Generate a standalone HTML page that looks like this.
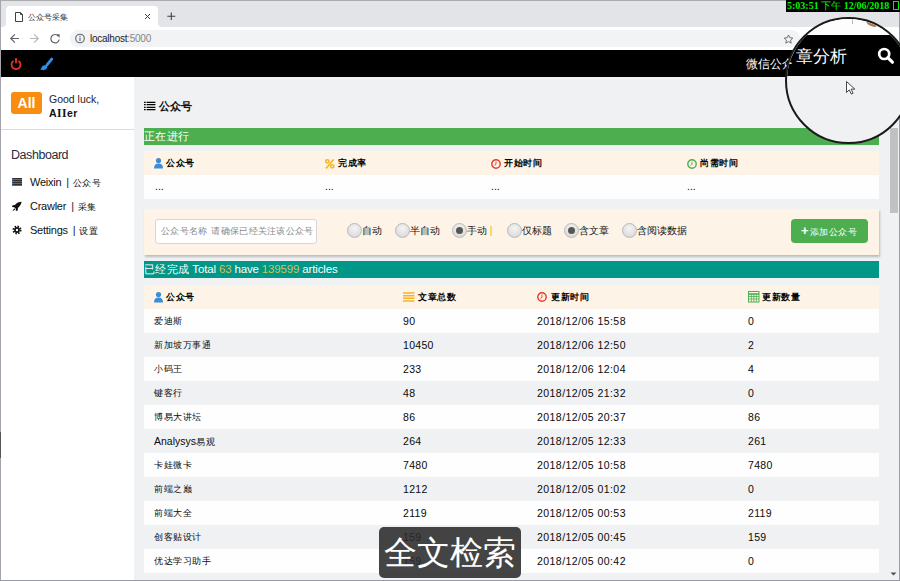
<!DOCTYPE html>
<html><head><meta charset="utf-8">
<style>
*{box-sizing:border-box;margin:0;padding:0}
html,body{width:900px;height:581px;overflow:hidden}
body{position:relative;background:#f0f1f3;font-family:"Liberation Sans",sans-serif;color:#222}
.a{position:absolute}
svg{position:absolute;overflow:visible}
#tabs{left:0;top:0;width:900px;height:27px;background:#e2e4e8;border-top:1px solid #a9abad}
#tab{left:6px;top:6px;width:152px;height:21px;background:#fff;border-radius:4px 4px 0 0}
#addr{left:0;top:27px;width:900px;height:23px;background:#fff}
#omni{left:70px;top:30px;width:730px;height:17px;background:#f1f3f4;border-radius:9px}
#nav{left:0;top:50px;width:900px;height:27px;background:#000}
#side{left:0;top:77px;width:134px;height:504px;background:#fff}
.bar{left:144px;width:735px;height:17px;color:#fff;font-size:11px;line-height:17px;white-space:nowrap;letter-spacing:0.25px}
.thead{left:144px;width:735px;height:24px;background:#fdf4e7;font-size:9px;letter-spacing:0.5px;font-weight:bold;line-height:25px;color:#000}
.row{left:144px;width:735px;height:24px;font-size:10.5px;line-height:24px;white-space:nowrap;color:#0a0a0a}
.w{background:#fefefe}
.g{background:#f0f1f3}
.c1{left:10px;font-size:9px;letter-spacing:0.5px}
.c2{left:259px;letter-spacing:0.3px}
.c3{left:393px;letter-spacing:0.45px}
.c4{left:604px;letter-spacing:0.3px}
.radio{width:15px;height:15px;border-radius:50%;border:1px solid #b9b9b9;background:radial-gradient(circle at 50% 35%,#f4f4f4,#d4d4d4)}
.radio.on::after{content:"";position:absolute;left:3px;top:3px;width:7px;height:7px;border-radius:50%;background:#555}
.rl{font-size:10px;color:#111;line-height:15px;white-space:nowrap}
.menu{font-size:11px;color:#111;white-space:nowrap;line-height:12px;letter-spacing:-0.25px}
.sep{margin:0 4px 0 5px;color:#223}
.zh{font-size:9px;letter-spacing:0.4px}
.lt{font-size:11.5px;letter-spacing:-0.15px}

</style></head><body>
<!-- browser chrome -->
<div class="a" id="tabs"></div>
<div class="a" style="left:1px;top:21px;width:162px;height:6px;background:#fff"></div>
<div class="a" style="left:1px;top:6px;width:5px;height:21px;background:#e2e4e8;border-bottom-right-radius:4px"></div>
<div class="a" style="left:158px;top:6px;width:742px;height:21px;background:#e2e4e8;border-bottom-left-radius:4px"></div>
<div class="a" id="tab"></div>
<svg style="left:0;top:0" width="900" height="50">
  <path d="M15.5 12.5h5l2 2v7h-7z M20.5 12.5v2h2" fill="none" stroke="#3c4043" stroke-width="1"/>
  <path d="M145 14l5 5M150 14l-5 5" stroke="#3c4043" stroke-width="1"/>
  <path d="M171.3 12.5v7.5M167.3 16.3h8" stroke="#3c4043" stroke-width="1.1"/>
</svg>
<div class="a" style="left:28px;top:12px;font-size:8px;line-height:11px;color:#333;white-space:nowrap">公众号采集</div>
<div class="a" id="addr"></div>
<div class="a" id="omni"></div>
<svg style="left:0;top:0" width="900" height="50">
  <path d="M19 38.5H10.8M14.9 34.3L10.7 38.5L14.9 42.7" fill="none" stroke="#5f6368" stroke-width="1.15"/>
  <path d="M30 38.5H38.2M34.1 34.3L38.3 38.5L34.1 42.7" fill="none" stroke="#b5b8bb" stroke-width="1.15"/>
  <path d="M58.3 36A4.2 4.2 0 1 0 59.2 39.5" fill="none" stroke="#5f6368" stroke-width="1.2"/>
  <path d="M56 34.2h3.6v3.6z" fill="#5f6368"/>
  <circle cx="80" cy="38.5" r="4.3" fill="none" stroke="#5f6368" stroke-width="1.1"/>
  <path d="M80 37.5v3.5M80 35.8v0.9" stroke="#5f6368" stroke-width="1.1"/>
  <path d="M788.5 35l1.3 2.7 3 .4-2.2 2 .6 3-2.7-1.5-2.7 1.5.6-3-2.2-2 3-.4z" fill="none" stroke="#5f6368" stroke-width="0.9"/>
</svg>
<div class="a" style="left:90px;top:32px;font-size:10px;line-height:13px;color:#202124;white-space:nowrap;letter-spacing:-0.25px">localhost<span style="color:#80868b">:5000</span></div>
<!-- clock -->
<div class="a" style="left:786px;top:0;width:114px;height:12px;background:#000;color:#00f400;font-family:'Liberation Serif',serif;font-weight:bold;font-size:10px;line-height:12px;white-space:nowrap;padding-left:1px">5:03:51 <span style="font-weight:normal">下午</span> 12/06/2018 <span style="display:inline-block;width:6px;height:9px;border:1px solid #00f400;vertical-align:-1px;margin-left:1px"></span></div>
<!-- navbar -->
<div class="a" id="nav"></div>
<svg style="left:0;top:50px" width="60" height="27">
  <path d="M13.5 10.9A4.5 4.5 0 1 0 18.5 10.9" fill="none" stroke="#ee3524" stroke-width="1.75"/>
  <path d="M16 8v5.2" stroke="#ee3524" stroke-width="1.75"/>
  <path d="M51.8 9L47 14.8" stroke="#2e8fe6" stroke-width="2.8" stroke-linecap="round"/>
  <path d="M46.8 15.6C44.8 14.6 42.2 15.4 41.6 17.4 41.3 18.4 40.6 18.9 40 19.1 41.5 20.4 44.6 20.6 46.2 19.1 47.3 18.1 47.6 16.4 46.8 15.6Z" fill="#2e8fe6"/>
</svg>
<div class="a" style="left:746px;top:57px;font-size:12px;line-height:14px;color:#fff;white-space:nowrap">微信公众号文章分析</div>
<!-- sidebar -->
<div class="a" id="side"></div>
<div class="a" style="left:11px;top:92px;width:31px;height:22px;background:#f98d12;border-radius:3px;color:#fff;font-weight:bold;font-size:14px;line-height:22px;text-align:center">All</div>
<div class="a" style="left:49px;top:93px;font-size:10.5px;line-height:13px;color:#1c1c2c;white-space:nowrap">Good luck,</div>
<div class="a" style="left:49px;top:107px;font-size:10.5px;line-height:13px;color:#111;font-weight:bold;white-space:nowrap;letter-spacing:0.3px">A<span style="font-family:'Liberation Serif',serif;font-size:11.5px;letter-spacing:0.6px">II</span>er</div>
<div class="a" style="left:1px;top:129px;width:133px;height:1px;background:#fbd98f"></div>
<div class="a" style="left:11px;top:149px;font-size:12.5px;line-height:13px;color:#2c2c40;white-space:nowrap;letter-spacing:-0.45px">Dashboard</div>
<svg style="left:0;top:0" width="30" height="240">
  <rect x="12" y="178" width="10" height="8" fill="#666"/>
  <path d="M12 178.5h10M12 180.5h10M12 182.5h10M12 184.5h10" stroke="#2a2a2a" stroke-width="0.9"/>
  <path d="M12.8 178v8" stroke="#3a8ee0" stroke-width="0.8" opacity="0.6"/>
  <path d="M21.6 201.8c-2.6 0-5 1.2-6.6 3.2l-2.4.3-.6 1.8 2.2.1 1.6 1.6.1 2.2 1.8-.6.3-2.4c2-1.6 3.2-4 3.6-6.2z" fill="#111"/>
  <path d="M14.2 208.3l-1.8 2.9 2.9-1.8z" fill="#111"/>
  <circle cx="17" cy="230" r="3.6" fill="none" stroke="#111" stroke-width="1.8" stroke-dasharray="1.5 1.33"/>
  <circle cx="17" cy="230" r="2.9" fill="#111"/>
  <circle cx="17" cy="230" r="1.2" fill="#fff"/>
</svg>
<div class="a menu" style="left:30px;top:176px">Weixin<span class="sep">|</span><span class="zh">公众号</span></div>
<div class="a menu" style="left:30px;top:200px">Crawler<span class="sep">|</span><span class="zh">采集</span></div>
<div class="a menu" style="left:30px;top:224px">Settings<span class="sep">|</span><span class="zh">设置</span></div>
<!-- main header -->
<svg style="left:144px;top:101px" width="14" height="12">
  <path d="M0 1.3h1.7M0 3.6h1.7M0 6.4h1.7M0 8.7h1.7M2.6 1.3h8.8M2.6 3.6h8.8M2.6 6.4h8.8M2.6 8.7h8.8" stroke="#000" stroke-width="1.3"/>
</svg>
<div class="a" style="left:159px;top:99px;font-size:11px;font-weight:bold;line-height:14px;color:#111;white-space:nowrap">公众号</div>
<!-- running -->
<div class="a bar" style="top:128px;background:#4cae4f">正在进行</div>
<div class="a thead" style="top:151px">
  <svg style="left:10px;top:7px" width="9" height="11"><circle cx="4.5" cy="2.6" r="2.6" fill="#3a8ed8"/><path d="M0 10.5c0-3.5 1.5-5 4.5-5s4.5 1.5 4.5 5z" fill="#3a8ed8"/></svg>
  <span class="a" style="left:22px">公众号</span>
  <svg style="left:181px;top:8px" width="10" height="10"><circle cx="2.3" cy="2.3" r="1.6" fill="none" stroke="#f5b324" stroke-width="1.5"/><circle cx="7.3" cy="7.3" r="1.6" fill="none" stroke="#f5b324" stroke-width="1.5"/><path d="M8.6 0.6L1 9.4" stroke="#f5b324" stroke-width="1.6"/></svg>
  <span class="a" style="left:194px">完成率</span>
  <svg style="left:347px;top:8px" width="10" height="10"><circle cx="5" cy="5" r="4.2" fill="none" stroke="#e43b2c" stroke-width="1.4"/><path d="M5 2.5v2.8l-1.5 1" fill="none" stroke="#e43b2c" stroke-width="0.9"/></svg>
  <span class="a" style="left:360px">开始时间</span>
  <svg style="left:543px;top:8px" width="10" height="10"><circle cx="5" cy="5" r="4.2" fill="none" stroke="#4cae4f" stroke-width="1.4"/><path d="M5 2.5v2.8l-1.5 1" fill="none" stroke="#4cae4f" stroke-width="0.9"/></svg>
  <span class="a" style="left:556px">尚需时间</span>
</div>
<div class="a row w" style="top:175px">
  <span class="a" style="left:11px;top:-1px">...</span>
  <span class="a" style="left:181px;top:-1px">...</span>
  <span class="a" style="left:347px;top:-1px">...</span>
  <span class="a" style="left:543px;top:-1px">...</span>
</div>
<!-- panel -->
<div class="a" style="left:144px;top:209px;width:735px;height:46px;background:#fdf4e7;box-shadow:1px 2px 2px rgba(0,0,0,0.22)"></div>
<div class="a" style="left:155px;top:219px;width:162px;height:25px;background:#fff;border:1px solid #d6d6d6;border-radius:3px;font-size:9px;line-height:23px;color:#8a8a8a;padding-left:5px;letter-spacing:0.3px;word-spacing:1px;white-space:nowrap;overflow:hidden">公众号名称 请确保已经关注该公众号</div>
<div class="a radio" style="left:347px;top:223px"></div><div class="a rl" style="left:362px;top:223px">自动</div>
<div class="a radio" style="left:395px;top:223px"></div><div class="a rl" style="left:410px;top:223px">半自动</div>
<div class="a radio on" style="left:452px;top:223px"></div><div class="a rl" style="left:467px;top:223px">手动 <span style="color:#f5a623">|</span></div>
<div class="a radio" style="left:507px;top:223px"></div><div class="a rl" style="left:522px;top:223px">仅标题</div>
<div class="a radio on" style="left:564px;top:223px"></div><div class="a rl" style="left:579px;top:223px">含文章</div>
<div class="a radio" style="left:622px;top:223px"></div><div class="a rl" style="left:637px;top:223px">含阅读数据</div>
<div class="a" style="left:791px;top:219px;width:77px;height:24px;background:#4cae4f;border-radius:4px;color:#fff;font-size:9px;letter-spacing:0.45px;line-height:24px;white-space:nowrap;padding-left:10px"><b style="font-size:13px;margin-right:1px">+</b>添加公众号</div>
<!-- done -->
<div class="a bar" style="top:261px;background:#009688">已经完成 <span class="lt">Total <span style="color:#cfc551">63</span> have <span style="color:#cfc551">139599</span> articles</span></div>
<div class="a thead" style="top:285px">
  <svg style="left:10px;top:7px" width="9" height="11"><circle cx="4.5" cy="2.6" r="2.6" fill="#3a8ed8"/><path d="M0 10.5c0-3.5 1.5-5 4.5-5s4.5 1.5 4.5 5z" fill="#3a8ed8"/></svg>
  <span class="a" style="left:22px">公众号</span>
  <svg style="left:259px;top:7px" width="12" height="10"><path d="M0 1h11.5M0 3.7h11.5M0 6.3h11.5M0 9h11.5" stroke="#f5b324" stroke-width="1.5"/></svg>
  <span class="a" style="left:274px">文章总数</span>
  <svg style="left:393px;top:7px" width="10" height="10"><circle cx="5" cy="5" r="4.2" fill="none" stroke="#e43b2c" stroke-width="1.4"/><path d="M5 2.5v2.8l-1.5 1" fill="none" stroke="#e43b2c" stroke-width="0.9"/></svg>
  <span class="a" style="left:407px">更新时间</span>
  <svg style="left:604px;top:6px" width="12" height="12"><rect x="0.5" y="0.5" width="10.5" height="10.5" fill="none" stroke="#4cae4f" stroke-width="1"/><path d="M0.5 3h10.5" stroke="#4cae4f" stroke-width="1.6"/><path d="M0.5 5.5h10.5M0.5 8h10.5M3.3 3v8M5.8 3v8M8.3 3v8" stroke="#4cae4f" stroke-width="0.8"/></svg>
  <span class="a" style="left:618px">更新数量</span>
</div>
<div class="a row w" style="top:309px"><span class="a c1">爱迪斯</span><span class="a c2">90</span><span class="a c3">2018/12/06 15:58</span><span class="a c4">0</span></div>
<div class="a row g" style="top:333px"><span class="a c1">新加坡万事通</span><span class="a c2">10450</span><span class="a c3">2018/12/06 12:50</span><span class="a c4">2</span></div>
<div class="a row w" style="top:357px"><span class="a c1">小码王</span><span class="a c2">233</span><span class="a c3">2018/12/06 12:04</span><span class="a c4">4</span></div>
<div class="a row g" style="top:381px"><span class="a c1">键客行</span><span class="a c2">48</span><span class="a c3">2018/12/05 21:32</span><span class="a c4">0</span></div>
<div class="a row w" style="top:405px"><span class="a c1">博易大讲坛</span><span class="a c2">86</span><span class="a c3">2018/12/05 20:37</span><span class="a c4">86</span></div>
<div class="a row g" style="top:429px"><span class="a c1"><span style="font-size:10.5px;letter-spacing:0">Analysys</span>易观</span><span class="a c2">264</span><span class="a c3">2018/12/05 12:33</span><span class="a c4">261</span></div>
<div class="a row w" style="top:453px"><span class="a c1">卡娃微卡</span><span class="a c2">7480</span><span class="a c3">2018/12/05 10:58</span><span class="a c4">7480</span></div>
<div class="a row g" style="top:477px"><span class="a c1">前端之巅</span><span class="a c2">1212</span><span class="a c3">2018/12/05 01:02</span><span class="a c4">0</span></div>
<div class="a row w" style="top:501px"><span class="a c1">前端大全</span><span class="a c2">2119</span><span class="a c3">2018/12/05 00:53</span><span class="a c4">2119</span></div>
<div class="a row g" style="top:525px"><span class="a c1">创客贴设计</span><span class="a c2">159</span><span class="a c3">2018/12/05 00:45</span><span class="a c4">159</span></div>
<div class="a row w" style="top:549px"><span class="a c1">优达学习助手</span><span class="a c2">159</span><span class="a c3">2018/12/05 00:42</span><span class="a c4">0</span></div>
<!-- scrollbar -->
<div class="a" style="left:887px;top:77px;width:13px;height:504px;background:#f0f1f3"></div>
<div class="a" style="left:890px;top:128px;width:8px;height:85px;background:#c1c1c1"></div>
<svg style="left:887px;top:566px" width="13" height="15"><path d="M3.5 6.5h6l-3 3z" fill="#505050"/></svg>
<!-- overlay -->
<div class="a" style="left:379px;top:527px;width:142px;height:51px;background:rgba(42,42,42,0.88);border-radius:5px;color:#fff;font-size:33px;line-height:51px;text-align:center;white-space:nowrap">全文检索</div>
<div class="a" style="left:899px;top:12px;width:1px;height:569px;background:#9c9ca4"></div>
<!-- magnifier -->
<div class="a" style="left:785px;top:17px;width:127px;height:127px;border-radius:50%;overflow:hidden;background:#f0f1f3;border:2.6px solid #1a1a1a">
  <div class="a" style="left:-3px;top:-3px;width:132px;height:19px;background:#fdfdfd"></div>
  <div class="a" style="left:65px;top:0px;width:1px;height:5px;background:#b8b8b8"></div>
  <div class="a" style="left:79px;top:3px;width:11px;height:4px;border-radius:50%;background:#9a5520;opacity:0.8;transform:rotate(25deg)"></div>
  <div class="a" style="left:-3px;top:16px;width:132px;height:41px;background:#000"></div>
  <div class="a" style="left:-11px;top:28px;font-size:17px;line-height:20px;color:#fff;white-space:nowrap">文</div><div class="a" style="left:9px;top:28px;font-size:17px;line-height:20px;color:#fff;white-space:nowrap">章分析</div>
  <svg style="left:90px;top:28px" width="18" height="18"><circle cx="7.2" cy="7" r="5" fill="none" stroke="#fff" stroke-width="2.7"/><path d="M10.8 10.6l4.6 4.6" stroke="#fff" stroke-width="3.2" stroke-linecap="round"/></svg>
  <svg style="left:59px;top:62px" width="12" height="14"><path d="M0.5 0.5v11l2.8-2.6 2 4.2 1.8-.9-2-4.1h3.8z" fill="#fff" stroke="#333" stroke-width="0.9"/></svg>
</div>
<!-- window borders -->
<div class="a" style="left:0;top:0;width:1px;height:581px;background:#a4a4ac"></div>
<div class="a" style="left:0;top:432px;width:1px;height:26px;background:#555"></div>
<div class="a" style="left:0;top:580px;width:900px;height:1px;background:#9a9aa4"></div>

</body></html>
